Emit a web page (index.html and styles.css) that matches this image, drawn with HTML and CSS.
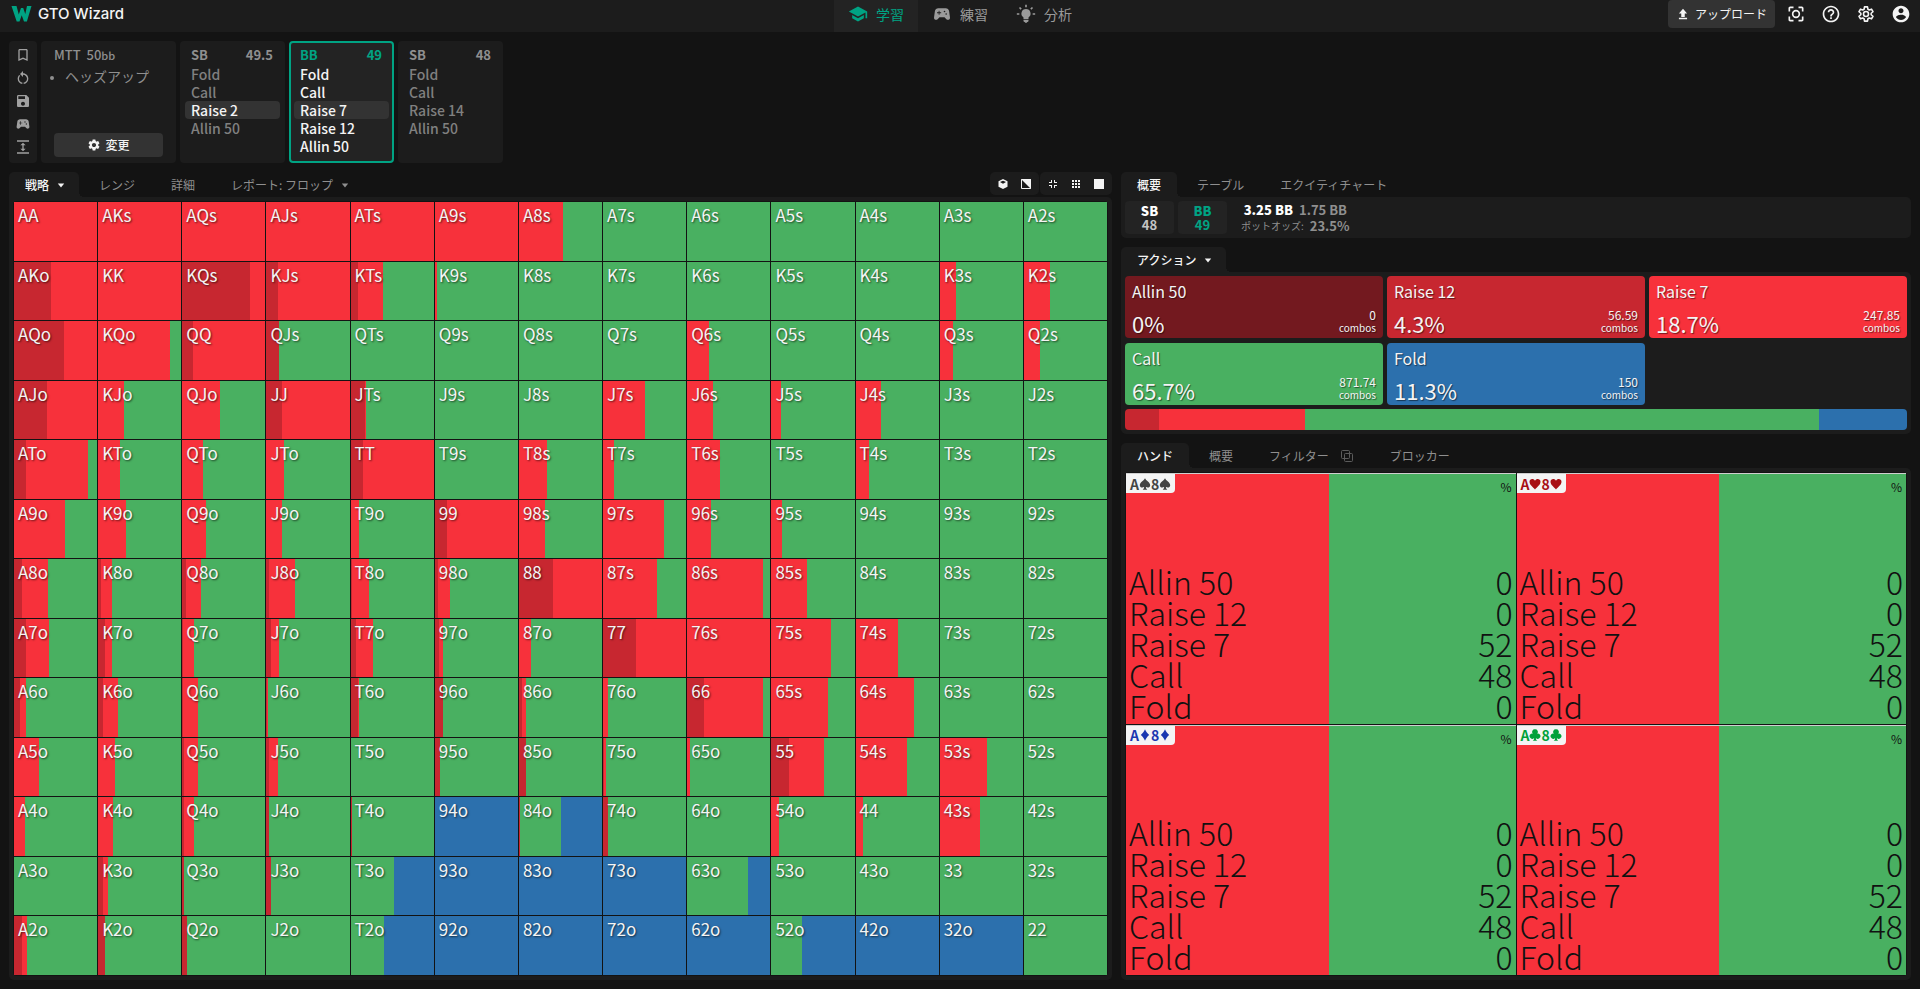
FILE: index.html
```html
<!DOCTYPE html>
<html lang="ja">
<head>
<meta charset="utf-8">
<title>GTO Wizard</title>
<meta name="viewport" content="width=device-width, initial-scale=1">
<link rel="stylesheet" href="styles.css">
</head>
<body>
<svg class="sprite" aria-hidden="true">
  <symbol id="i-school" viewBox="0 0 24 24"><path d="M5 13.18v4L12 21l7-3.82v-4L12 17l-7-3.82zM12 3L1 9l11 6 9-4.91V17h2V9L12 3z"/></symbol>
  <symbol id="i-pad" viewBox="0 0 24 24"><path d="M21.58 16.09l-1.09-7.66C20.21 6.46 18.52 5 16.53 5H7.47C5.48 5 3.79 6.46 3.51 8.43l-1.09 7.66C2.2 17.63 3.39 19 4.94 19c.68 0 1.32-.27 1.8-.75L9 16h6l2.25 2.25c.48.48 1.13.75 1.8.75 1.56 0 2.75-1.37 2.53-2.91zM11 11H9v2H8v-2H6v-1h2V8h1v2h2v1zm4-1c-.55 0-1-.45-1-1s.45-1 1-1 1 .45 1 1-.45 1-1 1zm2 3c-.55 0-1-.45-1-1s.45-1 1-1 1 .45 1 1-.45 1-1 1z"/></symbol>
  <symbol id="i-bulb" viewBox="0 0 24 24"><path d="M12 6a5.5 5.5 0 0 0-3 10.100V18h6v-1.900A5.500 5.500 0 0 0 12 6zM9 19h6v1.500a1 1 0 0 1-1 1h-.5l-.5 1h-2l-.5-1H10a1 1 0 0 1-1-1zM11 1h2v3h-2zM1 11h3v2H1zM20 11h3v2h-3zM3.500 4.900l1.400-1.400 2 2-1.400 1.400zM17.100 5.500l2-2 1.400 1.400-2 2z"/></symbol>
  <symbol id="i-upload" viewBox="0 0 24 24"><path d="M5 21h14v-2.500H5V21zm0-10h4v6h6v-6h4l-7-8-7 8z"/></symbol>
  <symbol id="i-scan" viewBox="0 0 24 24"><path d="M5 15H3v4c0 1.100.9 2 2 2h4v-2H5v-4zM5 5h4V3H5c-1.100 0-2 .9-2 2v4h2V5zm14-2h-4v2h4v4h2V5c0-1.100-.9-2-2-2zm0 16h-4v2h4c1.100 0 2-.9 2-2v-4h-2v4z"/><circle cx="12" cy="12" r="4" fill="none" stroke="currentColor" stroke-width="2"/></symbol>
  <symbol id="i-help" viewBox="0 0 24 24"><path d="M11 18h2v-2h-2v2zm1-16C6.480 2 2 6.480 2 12s4.480 10 10 10 10-4.480 10-10S17.520 2 12 2zm0 18c-4.410 0-8-3.590-8-8s3.590-8 8-8 8 3.590 8 8-3.590 8-8 8zm0-14c-2.210 0-4 1.790-4 4h2c0-1.100.9-2 2-2s2 .9 2 2c0 2-3 1.750-3 5h2c0-2.250 3-2.500 3-5 0-2.210-1.790-4-4-4z"/></symbol>
  <symbol id="i-gear" viewBox="0 0 24 24"><path d="M19.140 12.940c.04-.3.06-.61.06-.94 0-.32-.02-.64-.07-.94l2.030-1.580c.18-.14.23-.41.12-.61l-1.920-3.320c-.12-.22-.37-.29-.59-.22l-2.390.96c-.5-.38-1.030-.7-1.620-.94l-.36-2.540c-.04-.24-.24-.41-.48-.41h-3.840c-.24 0-.43.17-.47.41l-.36 2.540c-.59.24-1.130.57-1.620.94l-2.390-.96c-.22-.08-.47 0-.59.22L2.740 8.870c-.12.21-.08.47.12.61l2.030 1.580c-.05.3-.09.63-.09.94s.02.64.07.94l-2.030 1.580c-.18.14-.23.41-.12.61l1.920 3.320c.12.22.37.29.59.22l2.390-.96c.5.38 1.030.7 1.620.94l.36 2.540c.05.24.24.41.48.41h3.840c.24 0 .44-.17.47-.41l.36-2.540c.59-.24 1.130-.56 1.620-.94l2.390.96c.22.08.47 0 .59-.22l1.920-3.320c.12-.22.07-.47-.12-.61l-2.010-1.580zM12 15.600c-1.980 0-3.600-1.620-3.600-3.600s1.620-3.600 3.600-3.600 3.600 1.620 3.600 3.600-1.620 3.600-3.600 3.600z"/></symbol>
  <symbol id="i-gear-line" viewBox="0 0 24 24"><g fill="none" stroke="currentColor" stroke-width="1.900" stroke-linejoin="round"><path d="M18.200 12.900l2.200 1.800-1.800 3.100-2.700-1-1.600.9-.5 2.900h-3.600l-.5-2.900-1.600-.9-2.700 1-1.800-3.100 2.200-1.800v-1.800L3.600 9.300l1.800-3.100 2.700 1 1.600-.9.500-2.900h3.600l.5 2.900 1.600.9 2.700-1 1.800 3.100-2.200 1.800z"/><circle cx="12" cy="12" r="3"/></g></symbol>
  <symbol id="i-user" viewBox="0 0 24 24"><path d="M12 2C6.480 2 2 6.480 2 12s4.480 10 10 10 10-4.480 10-10S17.520 2 12 2zm0 3c1.660 0 3 1.340 3 3s-1.340 3-3 3-3-1.340-3-3 1.340-3 3-3zm0 14.200c-2.500 0-4.710-1.280-6-3.220.03-1.990 4-3.080 6-3.080 1.990 0 5.970 1.090 6 3.080-1.290 1.940-3.500 3.220-6 3.220z"/></symbol>
  <symbol id="i-bookmark" viewBox="0 0 24 24"><path d="M17 3H7c-1.100 0-1.990.9-1.990 2L5 21l7-3 7 3V5c0-1.100-.9-2-2-2zm0 15l-5-2.180L7 18V5h10v13z"/></symbol>
  <symbol id="i-reset" viewBox="0 0 24 24"><path d="M12 5V1.500L7.500 6l4.500 4.500V7c3.310 0 6 2.690 6 6 0 2.970-2.170 5.430-5 5.910v2.020c3.950-.49 7-3.850 7-7.930 0-4.420-3.580-8-8-8zM6 13c0-1.650.67-3.150 1.760-4.240L6.340 7.340C4.900 8.790 4 10.790 4 13c0 4.080 3.050 7.440 7 7.930v-2.020c-2.830-.48-5-2.940-5-5.910z"/></symbol>
  <symbol id="i-save" viewBox="0 0 24 24"><path d="M17 3H5c-1.110 0-2 .9-2 2v14c0 1.100.89 2 2 2h14c1.100 0 2-.9 2-2V7l-4-4zm-5 16c-1.660 0-3-1.340-3-3s1.340-3 3-3 3 1.340 3 3-1.340 3-3 3zm3-10H5V5h10v4z"/></symbol>
  <symbol id="i-height" viewBox="0 0 24 24"><path d="M3 2h18v2H3zM3 20h18v2H3zM12 5.500l4 4h-3v5h3l-4 4-4-4h3v-5H8z"/></symbol>
  <symbol id="i-down" viewBox="0 0 10 6"><path d="M1 .5h8L5 5.500z"/></symbol>
  <symbol id="i-copy" viewBox="0 0 14 14"><g fill="none" stroke="currentColor"><rect x="1.500" y="1.500" width="8" height="8" rx="1"/><rect x="4.500" y="4.500" width="8" height="8" rx="1"/></g></symbol>
  <symbol id="s-spade" viewBox="0 0 12 12"><path d="M6 .3C5 2.600.8 4.300.8 7.300c0 2.400 3 3 4.300 1.500 0 1.300-.4 2.200-1.400 2.900h4.600c-1-.7-1.400-1.600-1.400-2.900 1.300 1.500 4.300.9 4.300-1.500 0-3-4.200-4.700-5.200-7z"/></symbol>
  <symbol id="s-heart" viewBox="0 0 12 12"><path d="M6 11.500C4 9 .5 6.800.5 3.700.5.600 4.700-.1 6 2.800 7.300-.1 11.500.6 11.500 3.700c0 3.100-3.500 5.300-5.500 7.800z"/></symbol>
  <symbol id="s-diamond" viewBox="0 0 12 12"><path d="M6 .3C7 2.700 8.600 4.700 10.200 6 8.600 7.300 7 9.300 6 11.700 5 9.300 3.400 7.300 1.800 6 3.400 4.700 5 2.700 6 .3z"/></symbol>
  <symbol id="s-club" viewBox="0 0 12 12"><path d="M6 .3a2.600 2.600 0 0 1 2.100 4.400 2.600 2.600 0 1 1-1.200 4.200c0 1.300.4 2.100 1.400 2.800H3.700c1-.7 1.400-1.500 1.400-2.800a2.600 2.600 0 1 1-1.200-4.200A2.600 2.600 0 0 1 6 .3z"/></symbol>
</svg>

<header class="topbar">
  <a class="brand" href="#">
    <svg class="brand-mark" viewBox="0 0 20 16" aria-hidden="true"><path d="M0 0h5l2.300 8.500L9.500 2h2.200l2.100 6L15.500 0H20l-4.600 15.500h-2.900l-2.300-6.200L8 15.500H5.200z"/></svg>
    <span>GTO Wizard</span>
  </a>
  <nav class="mainnav">
    <a class="mainnav-item is-active" href="#"><svg class="ic20"><use href="#i-school"/></svg>学習</a>
    <a class="mainnav-item" href="#"><svg class="ic20"><use href="#i-pad"/></svg>練習</a>
    <a class="mainnav-item" href="#"><svg class="ic20"><use href="#i-bulb"/></svg>分析</a>
  </nav>
  <div class="tools">
    <button class="upload"><svg class="ic14"><use href="#i-upload"/></svg>アップロード</button>
    <button class="tool" aria-label="スキャン"><svg class="ic20"><use href="#i-scan"/></svg></button>
    <button class="tool" aria-label="ヘルプ"><svg class="ic20"><use href="#i-help"/></svg></button>
    <button class="tool" aria-label="設定"><svg class="ic20"><use href="#i-gear-line"/></svg></button>
    <button class="tool" aria-label="アカウント"><svg class="ic20"><use href="#i-user"/></svg></button>
  </div>
</header>

<section class="history">
  <div class="rail">
    <button aria-label="ブックマーク"><svg class="ic16"><use href="#i-bookmark"/></svg></button>
    <button aria-label="リセット"><svg class="ic16"><use href="#i-reset"/></svg></button>
    <button aria-label="保存"><svg class="ic16"><use href="#i-save"/></svg></button>
    <button aria-label="練習"><svg class="ic16"><use href="#i-pad"/></svg></button>
    <button aria-label="高さ"><svg class="ic16"><use href="#i-height"/></svg></button>
  </div>
  <div class="setup">
    <div class="setup-title">MTT&nbsp; 50<small>bb</small></div>
    <ul class="setup-list"><li>ヘッズアップ</li></ul>
    <button class="change"><svg class="ic14"><use href="#i-gear"/></svg>変更</button>
  </div>
  <div class="node">
    <div class="node-head"><span>SB</span><span>49.5</span></div>
    <button class="act">Fold</button><button class="act">Call</button><button class="act is-picked">Raise 2</button><button class="act">Allin 50</button>
  </div>
  <div class="node is-current">
    <div class="node-head"><span>BB</span><span>49</span></div>
    <button class="act">Fold</button><button class="act">Call</button><button class="act is-picked">Raise 7</button><button class="act">Raise 12</button><button class="act">Allin 50</button>
  </div>
  <div class="node">
    <div class="node-head"><span>SB</span><span>48</span></div>
    <button class="act">Fold</button><button class="act">Call</button><button class="act">Raise 14</button><button class="act">Allin 50</button>
  </div>
</section>

<main class="board">
  <section class="col-left">
    <div class="tabs">
      <button class="tab has-caret is-active">戦略<svg class="caret"><use href="#i-down"/></svg></button>
      <button class="tab">レンジ</button>
      <button class="tab">詳細</button>
      <button class="tab has-caret">レポート: フロップ<svg class="caret"><use href="#i-down"/></svg></button>
      <div class="views">
        <div class="view-group">
          <button aria-label="立体"><svg class="ic10" viewBox="0 0 10 10"><path d="M5 0l4.500 2.300v5.400L5 10 .5 7.700V2.300z"/><path class="cut" d="M5 1.800l3 1.300L5 4.700 2 3.100z"/></svg></button>
          <button aria-label="分割"><svg class="ic10" viewBox="0 0 10 10"><path d="M.5.5h9v9h-9z" fill="none" stroke="currentColor"/><path d="M0 0h10v10z"/></svg></button>
        </div>
        <div class="view-group">
          <button aria-label="縮小"><svg class="ic10" viewBox="0 0 10 10"><path d="M3 1h1v3H1V3h2zM6 1h1v2h2v1H6zM1 6h3v3H3V7H1zM6 6h3v1H7v2H6z"/></svg></button>
          <button aria-label="グリッド"><svg class="ic10" viewBox="0 0 10 10"><path d="M1 1h2v2H1zM4 1h2v2H4zM7 1h2v2H7zM1 4h2v2H1zM4 4h2v2H4zM7 4h2v2H7zM1 7h2v2H1zM4 7h2v2H4zM7 7h2v2H7z"/></svg></button>
          <button aria-label="全面"><svg class="ic10" viewBox="0 0 10 10"><path d="M0 0h10v10H0z"/></svg></button>
        </div>
      </div>
    </div>
    <div class="panel panel-fill"><div class="matrix" id="matrix"></div></div>
  </section>

  <section class="col-right">
    <div>
      <div class="tabs">
        <button class="tab is-active">概要</button><button class="tab">テーブル</button><button class="tab">エクイティチャート</button>
      </div>
      <div class="panel overview">
        <div class="seat"><b>SB</b><span>48</span></div>
        <div class="seat is-hero"><b>BB</b><span>49</span></div>
        <div class="pot">
          <div class="pot-line"><b>3.25 BB</b><span>1.75 BB</span></div>
          <div class="pot-line"><small>ポットオッズ:</small><span>23.5%</span></div>
        </div>
      </div>
    </div>
    <div>
      <div class="tabs"><button class="tab has-caret is-active">アクション<svg class="caret"><use href="#i-down"/></svg></button></div>
      <div class="panel">
        <div class="actions">
          <button class="action c-allin"><span>Allin 50</span><span class="action-row"><b>0%</b><small>0<br><i>combos</i></small></span></button>
          <button class="action c-r12"><span>Raise 12</span><span class="action-row"><b>4.3%</b><small>56.59<br><i>combos</i></small></span></button>
          <button class="action c-r7"><span>Raise 7</span><span class="action-row"><b>18.7%</b><small>247.85<br><i>combos</i></small></span></button>
          <button class="action c-call"><span>Call</span><span class="action-row"><b>65.7%</b><small>871.74<br><i>combos</i></small></span></button>
          <button class="action c-fold"><span>Fold</span><span class="action-row"><b>11.3%</b><small>150<br><i>combos</i></small></span></button>
        </div>
        <div class="mix">
          <div class="c-r12" style="width:4.3%"></div><div class="c-r7" style="width:18.7%"></div><div class="c-call" style="width:65.7%"></div><div class="c-fold" style="width:11.3%"></div>
        </div>
      </div>
    </div>
    <div class="hands-block">
      <div class="tabs">
        <button class="tab is-active">ハンド</button><button class="tab">概要</button><button class="tab tab-copy">フィルター<svg class="copy"><use href="#i-copy"/></svg></button><button class="tab">ブロッカー</button>
      </div>
      <div class="panel panel-fill"><div class="hands" id="hands"></div></div>
    </div>
  </section>
</main>
<script src="app.js"></script>
</body>
</html>
```
FILE: styles.css
```css
:root {
  --bg: #131313;
  --panel: #1c1c1c;
  --raised: #232323;
  --button: #333;
  --dim: #8f8f8f;
  --text: #f4f4f4;
  --accent: #00a383;
  --allin: #73191f;
  --r12: #c72730;
  --r7: #f7313b;
  --call: #49b061;
  --fold: #2c70ad;
}
* { box-sizing: border-box; }
body {
  margin: 0;
  height: 100vh;
  display: flex;
  flex-direction: column;
  background: var(--bg);
  color: var(--text);
  font: 400 12px/18px "Noto Sans CJK JP", "Noto Sans", sans-serif;
}
button {
  margin: 0;
  padding: 0;
  border: 0;
  background: none;
  color: inherit;
  font: inherit;
  text-align: left;
  cursor: pointer;
}
a { color: inherit; text-decoration: none; }
svg { display: block; flex: none; fill: currentColor; }
.sprite { position: absolute; width: 0; height: 0; }
.ic10 { width: 10px; height: 10px; }
.ic14 { width: 14px; height: 14px; }
.ic16 { width: 16px; height: 16px; }
.ic20 { width: 20px; height: 20px; }

.topbar {
  display: grid;
  grid-template-columns: 1fr auto 1fr;
  height: 32px;
  flex: none;
  background: var(--panel);
}
.brand {
  display: flex;
  align-items: center;
  gap: 6px;
  padding: 0 0 4px 11px;
  font: 500 15px/20px Inter, sans-serif;
}
.brand-mark { width: 21px; height: 16px; color: var(--accent); }
.mainnav { display: flex; }
.mainnav-item {
  display: flex;
  align-items: center;
  gap: 8px;
  padding: 0 14px 4px;
  color: #9a9a9a;
  font-size: 14px;
}
.mainnav-item.is-active { background: var(--raised); color: var(--accent); }
.tools {
  display: flex;
  justify-content: flex-end;
  align-items: center;
  gap: 15px;
  padding: 0 9px 4px 0;
}
.upload {
  display: flex;
  align-items: center;
  gap: 5px;
  height: 28px;
  padding: 0 8px;
  margin-right: -4px;
  border-radius: 4px;
  background: var(--button);
}

.history { display: flex; gap: 4px; padding: 9px 9px 0; flex: none; }
.rail, .setup, .node { border-radius: 4px; background: var(--panel); height: 122px; }
.rail {
  display: flex;
  flex-direction: column;
  justify-content: space-between;
  align-items: center;
  width: 28px;
  padding: 6px 0 8px;
  color: #a0a0a0;
}
.setup { display: flex; flex-direction: column; width: 135px; padding: 5px 13px 6px; color: var(--dim); }
.setup-title { font-size: 13px; font-weight: 500; }
.setup-title small { font-size: 11px; }
.setup-list { margin: 3px 0 auto; padding-left: 11px; font-size: 14px; }
.setup-list li::marker { font-size: 11px; }
.change {
  display: flex;
  justify-content: center;
  align-items: center;
  gap: 4px;
  height: 24px;
  border-radius: 4px;
  background: var(--button);
  color: var(--text);
  font-weight: 500;
}
.node { width: 105px; padding: 5px 5px 0; color: #808080; }
.node-head {
  display: flex;
  justify-content: space-between;
  padding: 0 7px 1px 6px;
  color: var(--dim);
  font-size: 13px;
  font-weight: 700;
}
.act { display: block; width: 100%; padding: 0 6px; border-radius: 4px; font-size: 14px; line-height: 18px; font-weight: 500; }
.act.is-picked { background: var(--button); color: var(--text); }
.node.is-current { padding: 3px 3px 0; border: 2px solid var(--accent); background: var(--raised); color: var(--text); }
.node.is-current .node-head { color: var(--accent); }

.board {
  flex: 1;
  min-height: 0;
  display: grid;
  grid-template-columns: minmax(0, 1103fr) minmax(0, 790fr);
  gap: 9px;
  padding: 9px;
}
.col-left, .hands-block { display: flex; flex-direction: column; min-height: 0; }
.col-right { display: flex; flex-direction: column; gap: 9px; min-height: 0; }
.hands-block { flex: 1; }
.tabs { display: flex; gap: 4px; height: 25px; flex: none; }
.tab {
  position: relative;
  display: flex;
  align-items: center;
  gap: 8px;
  padding: 1px 16px 0;
  border-radius: 5px 5px 0 0;
  color: var(--dim);
}
.has-caret { padding-right: 14px; }
.tab-copy { gap: 11px; }
.tab.is-active { background: var(--panel); color: var(--text); font-weight: 500; }
.tab.is-active::after {
  content: "";
  position: absolute;
  left: 100%;
  bottom: 0;
  width: 5px;
  height: 5px;
  background: radial-gradient(circle at 100% 0, transparent 5px, var(--panel) 5px);
}
.caret { width: 8px; height: 5px; }
.copy { width: 14px; height: 14px; color: #5c5c5c; }
.views { display: flex; gap: 1px; height: 23px; margin-left: auto; }
.view-group { display: flex; align-items: center; gap: 13px; padding: 0 8px; border-radius: 5px; background: var(--panel); }
.cut { fill: var(--panel); }

.panel { padding: 4px; border-radius: 0 5px 5px 5px; background: var(--panel); }
.panel-fill { flex: 1; min-height: 0; }
.matrix {
  display: grid;
  grid-template-columns: repeat(13, minmax(0, 1fr));
  grid-template-rows: repeat(13, minmax(0, 1fr));
  gap: 1px;
  height: 100%;
  padding: 1px;
  border-radius: 4px;
  overflow: hidden;
  background: var(--bg);
}
.cell {
  display: flex;
  padding: 1px 4px;
  font-size: 17px;
  line-height: 23px;
  text-shadow: 1px 1px 2px rgba(0, 0, 0, .6);
}

.overview { display: flex; gap: 4px; }
.seat {
  display: flex;
  flex-direction: column;
  align-items: center;
  width: 49px;
  padding: 3px 0 2px;
  border-radius: 4px;
  background: var(--raised);
  font-size: 13px;
  font-weight: 700;
  line-height: 14px;
  color: #c4c4c4;
}
.seat b { color: #fff; }
.seat.is-hero, .seat.is-hero b { color: var(--accent); }
.pot {
  display: flex;
  flex-direction: column;
  align-items: center;
  padding: 1px 10px 0;
  font-size: 13px;
  font-weight: 700;
  line-height: 16px;
  color: var(--dim);
}
.pot-line { display: flex; gap: 6px; }
.pot b { color: #fff; }
.pot small { font-size: 10px; font-weight: 400; }

.actions { display: grid; grid-template-columns: repeat(3, minmax(0, 1fr)); gap: 5px 4px; }
.action {
  display: flex;
  flex-direction: column;
  justify-content: space-between;
  height: 62px;
  padding: 5px 7px 0;
  border-radius: 4px;
  font-size: 16px;
  line-height: 20px;
  text-shadow: 1px 1px 1px rgba(0, 0, 0, .5);
}
.action-row { display: flex; justify-content: space-between; align-items: flex-end; }
.action b { font-size: 22px; line-height: 30px; font-weight: 400; }
.action small { padding-bottom: 4px; font-size: 12px; line-height: 12px; text-align: right; }
.action i { font-size: 10px; font-style: normal; }
.mix { display: flex; height: 21px; margin-top: 4px; border-radius: 4px; overflow: hidden; }
.c-allin { background: var(--allin); }
.c-r12 { background: var(--r12); }
.c-r7 { background: var(--r7); }
.c-call { background: var(--call); }
.c-fold { background: var(--fold); }

.hands {
  display: grid;
  grid-template-columns: repeat(2, minmax(0, 1fr));
  grid-template-rows: repeat(2, minmax(0, 1fr));
  gap: 1px;
  height: 100%;
  padding: 1px;
  border-radius: 4px;
  overflow: hidden;
  background: var(--bg);
}
.hand {
  display: flex;
  flex-direction: column;
  justify-content: space-between;
  padding-bottom: 3px;
  border-top: 1px solid #cfcfcf;
  color: #111;
}
.hand-top { display: flex; justify-content: space-between; align-items: flex-start; }
.combo {
  display: flex;
  align-items: center;
  height: 19px;
  padding: 0 4px;
  border-radius: 0 0 4px 0;
  background: #f4f4f4;
  font-size: 14px;
  font-weight: 700;
}
.combo svg { width: 12px; height: 12px; }
.suit-spade { color: #444; }
.suit-heart { color: #a80f14; }
.suit-diamond { color: #1a37b0; }
.suit-club { color: #00a13a; }
.unit { padding: 4px 4px 0; font-size: 12px; }
.freq { display: flex; justify-content: space-between; padding: 0 3px; font-size: 32px; font-weight: 300; line-height: 31px; }
```
FILE: app.js
```js
const RANKS = "AKQJT98765432";

// Cumulative shares per cell: raise 12 / raise 7 / call (call defaults to 100), the rest folds.
const STRATEGY = [
  "0/100 0/100 0/100 0/100 0/100 0/100 0/53 - - - - - -",
  "44/100 0/100 82/100 14/100 8/38 0/2 - - - - - 0/19 0/31",
  "60/100 0/87 13/100 15/16 - - - - 0/27 - - 0/16 0/19",
  "40/100 0/31 0/46 19/100 17/18 - - 0/51 0/31 0/12 0/30 - -",
  "15/89 0/27 0/25 0/22 15/100 - 0/34 0/13 0/40 - 0/16 - -",
  "0/61 0/34 0/29 0/19 0/10 14/100 0/31 0/73 0/29 0/13 - - -",
  "10/41 4/17 5/23 4/34 1/22 4/18 41/100 0/65 0/92 0/43 - - -",
  "15/42 9/17 1/15 6/16 6/27 5/10 0/15 40/100 0/100 0/72 0/50 - -",
  "7/15 6/24 1/19 1/2 9/10 10/10 4/8 0/6 20/92 0/68 0/70 - -",
  "0/30 0/20 3/19 4/14 - 6/6 8/8 1/3.5 0/3.5 21/63 0/62 0/57 -",
  "0/13 0/18 3/15 3/3 1.5/1.5 0/0/0 1/1/51 6/6 - 0/9 0/8 0/48 -",
  "- 6/12 2.5/2.5 6/6 0/0/52 0/0/0 0/0/0 0/0/0 0/0/73 - - - -",
  "10/16 8/9 6/6 0.5/0.5 0/0/40 0/0/0 0/0/0 0/0/0 0/0/0 0/0/37 0/0/0 0/0/0 -"
];

function handName(row, col) {
  if (row === col) return RANKS[row] + RANKS[col];
  return row < col ? RANKS[row] + RANKS[col] + "s" : RANKS[col] + RANKS[row] + "o";
}

function fill(a, b, c) {
  return `linear-gradient(90deg, var(--r12) ${a}%, var(--r7) ${a}% ${b}%, var(--call) ${b}% ${c}%, var(--fold) ${c}%)`;
}

const matrix = document.getElementById("matrix");
STRATEGY.forEach((line, row) => {
  line.split(" ").forEach((entry, col) => {
    const [a = 0, b = 0, c = 100] = entry === "-" ? [] : entry.split("/").map(Number);
    const cell = document.createElement("button");
    cell.className = "cell";
    cell.textContent = handName(row, col);
    cell.style.background = fill(a, b, c);
    matrix.append(cell);
  });
});

const FREQS = [["Allin 50", 0], ["Raise 12", 0], ["Raise 7", 52], ["Call", 48], ["Fold", 0]];
const hands = document.getElementById("hands");
["spade", "heart", "diamond", "club"].forEach((suit) => {
  const icon = `<svg aria-label="${suit}"><use href="#s-${suit}"/></svg>`;
  const rows = FREQS.map(([name, value]) => `<div class="freq"><span>${name}</span><span>${value}</span></div>`).join("");
  const hand = document.createElement("div");
  hand.className = "hand";
  hand.style.background = fill(0, 52, 100);
  hand.innerHTML = `<div class="hand-top"><span class="combo suit-${suit}">A${icon}8${icon}</span><span class="unit">%</span></div><div>${rows}</div>`;
  hands.append(hand);
});
```
